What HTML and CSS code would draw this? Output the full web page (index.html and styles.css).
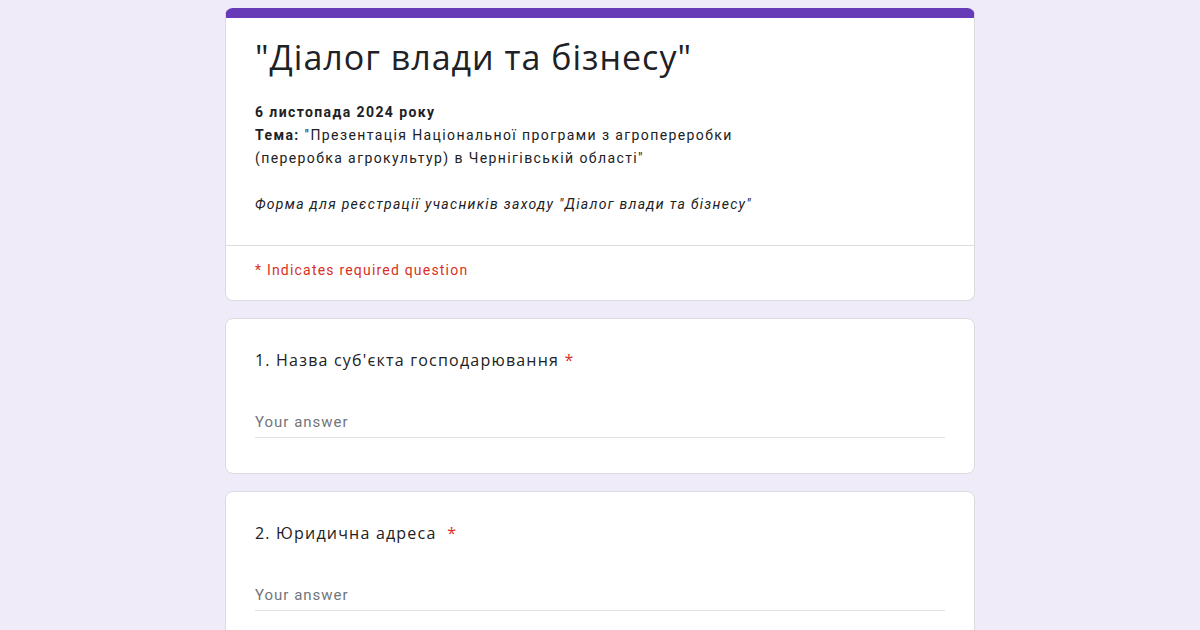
FILE: index.html
```html
<!DOCTYPE html>
<html lang="uk">
<head>
    <meta charset="UTF-8">
    <meta name="viewport" content="width=device-width, initial-scale=1.0">
    <title>"Діалог влади та бізнесу"</title>
    <link rel="stylesheet" href="styles.css">
</head>
<body>
    <div class="form">
        <div class="card header-card">
            <div class="header-main">
                <h1 class="form-title">"Діалог влади та бізнесу"</h1>
                <div class="form-desc">
                    <b>6 листопада 2024 року</b><br>
                    <b>Тема:</b> "Презентація Національної програми з агропереробки<br>
                    (переробка агрокультур) в Чернігівській області"<br>
                    <br>
                    <i>Форма для реєстрації учасників заходу "Діалог влади та бізнесу"</i>
                </div>
            </div>
            <div class="required-note">* Indicates required question</div>
        </div>

        <div class="card question">
            <div class="question-title">1. Назва суб'єкта господарювання <span class="star">*</span></div>
            <div class="answer">Your answer</div>
        </div>

        <div class="card question">
            <div class="question-title">2. Юридична адреса&nbsp; <span class="star">*</span></div>
            <div class="answer">Your answer</div>
        </div>
    </div>
</body>
</html>
```

FILE: styles.css
```css
body {
    margin: 0;
    background-color: #f0ebf8;
    font-family: Roboto, "Liberation Sans", sans-serif;
    color: #202124;
}
.form {
    width: 750px;
    margin: 0 auto;
    padding-top: 8px;
    display: flex;
    flex-direction: column;
    gap: 17px;
}
.card {
    background: white;
    border: 1px solid #dadce0;
    border-radius: 8px;
    box-sizing: border-box;
}
.header-card {
    border-top: 10px solid #673ab7;
}
.header-main {
    padding: 19px 29px 29px;
    border-bottom: 1px solid #dadce0;
}
.form-title {
    margin: 0;
    font-family: "Open Sans", sans-serif;
    font-weight: 400;
    font-size: 34px;
    line-height: 40px;
    letter-spacing: 1px;
}
.form-desc {
    margin-top: 24px;
    font-size: 14px;
    line-height: 23px;
    letter-spacing: 1.4px;
}
.form-desc i {
    letter-spacing: 1.3px;
}
.required-note {
    padding: 14px 29px 20px;
    font-size: 14px;
    line-height: 20px;
    color: #d93025;
    letter-spacing: 1.2px;
}
.question {
    padding: 29px 29px 35px;
}
.question-title {
    font-family: "Open Sans", sans-serif;
    font-size: 16px;
    line-height: 24px;
    letter-spacing: 1.2px;
}
.star {
    color: #d93025;
}
.answer {
    margin-top: 38px;
    padding-bottom: 3px;
    border-bottom: 1px solid #e0e0e0;
    font-size: 15px;
    line-height: 24px;
    color: #70757a;
    letter-spacing: 1px;
}
```
